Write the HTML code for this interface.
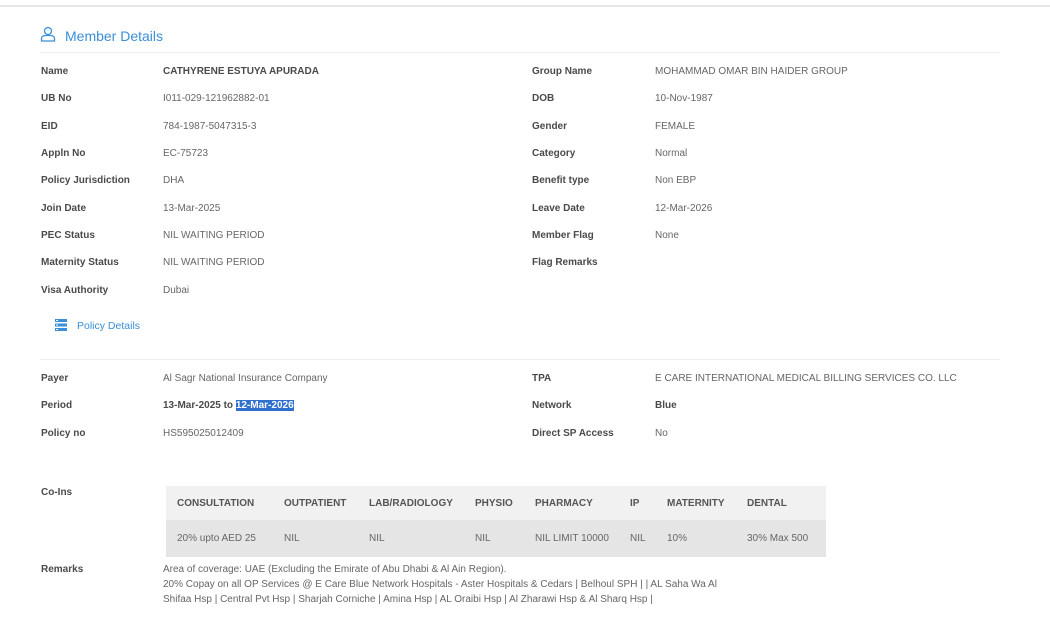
<!DOCTYPE html>
<html><head><meta charset="utf-8"><style>
*{margin:0;padding:0;box-sizing:border-box}
body{width:1050px;height:619px;background:#fff;position:relative;overflow:hidden;font-family:"Liberation Sans",sans-serif;font-size:10px;color:#555}
.a{position:absolute;white-space:nowrap;line-height:12px}
.r{margin-top:2px}
.l{font-weight:bold;color:#4a4a4a}
.v{color:#666}
.b{font-weight:bold;color:#4a4a4a}
.hr{position:absolute;height:1px;background:#eee}
table{position:absolute;left:166px;top:486px;width:660px;border-collapse:collapse;font-size:10px}
th{background:#f1f1f1;height:34px;text-align:left;font-weight:bold;color:#555;padding-left:11px}
td{background:#e5e5e5;height:37px;color:#666;padding-left:11px}
</style></head><body>
<div class="hr" style="left:0;top:5px;width:1050px;height:2px;background:#e6e6e6"></div>
<svg style="position:absolute;left:40px;top:26px" width="16" height="16" viewBox="0 0 16 16" fill="none" stroke="#3a8fd8" stroke-width="1.3"><circle cx="8" cy="5" r="3.5"/><path d="M1.5 15v-2.5c0-1.5 1.5-3 3.5-3h6c2 0 3.5 1.5 3.5 3V15z"/></svg>
<div class="a" style="left:65px;top:28px;font-size:14px;line-height:16px;color:#3a8fd8">Member Details</div>
<div class="hr" style="left:40px;top:52px;width:960px"></div>

<div class="a l r" style="left:41px;top:64px">Name</div><div class="a b r" style="left:163px;top:64px">CATHYRENE ESTUYA APURADA</div>
<div class="a l r" style="left:532px;top:64px">Group Name</div><div class="a v r" style="left:655px;top:64px">MOHAMMAD OMAR BIN HAIDER GROUP</div>
<div class="a l r" style="left:41px;top:91px">UB No</div><div class="a v r" style="left:163px;top:91px">I011-029-121962882-01</div>
<div class="a l r" style="left:532px;top:91px">DOB</div><div class="a v r" style="left:655px;top:91px">10-Nov-1987</div>
<div class="a l r" style="left:41px;top:119px">EID</div><div class="a v r" style="left:163px;top:119px">784-1987-5047315-3</div>
<div class="a l r" style="left:532px;top:119px">Gender</div><div class="a v r" style="left:655px;top:119px">FEMALE</div>
<div class="a l r" style="left:41px;top:146px">Appln No</div><div class="a v r" style="left:163px;top:146px">EC-75723</div>
<div class="a l r" style="left:532px;top:146px">Category</div><div class="a v r" style="left:655px;top:146px">Normal</div>
<div class="a l r" style="left:41px;top:173px">Policy Jurisdiction</div><div class="a v r" style="left:163px;top:173px">DHA</div>
<div class="a l r" style="left:532px;top:173px">Benefit type</div><div class="a v r" style="left:655px;top:173px">Non EBP</div>
<div class="a l r" style="left:41px;top:201px">Join Date</div><div class="a v r" style="left:163px;top:201px">13-Mar-2025</div>
<div class="a l r" style="left:532px;top:201px">Leave Date</div><div class="a v r" style="left:655px;top:201px">12-Mar-2026</div>
<div class="a l r" style="left:41px;top:228px">PEC Status</div><div class="a v r" style="left:163px;top:228px">NIL WAITING PERIOD</div>
<div class="a l r" style="left:532px;top:228px">Member Flag</div><div class="a v r" style="left:655px;top:228px">None</div>
<div class="a l r" style="left:41px;top:255px">Maternity Status</div><div class="a v r" style="left:163px;top:255px">NIL WAITING PERIOD</div>
<div class="a l r" style="left:532px;top:255px">Flag Remarks</div>
<div class="a l r" style="left:41px;top:283px">Visa Authority</div><div class="a v r" style="left:163px;top:283px">Dubai</div>

<svg style="position:absolute;left:55px;top:319px" width="12" height="12" viewBox="0 0 12 12" fill="#3a8fd8"><rect x="0" y="0" width="12" height="3"/><rect x="0" y="4.5" width="12" height="3"/><rect x="0" y="9" width="12" height="3"/><rect x="1" y="1" width="2" height="1" fill="#fff"/><rect x="1" y="5.5" width="2" height="1" fill="#fff"/><rect x="1" y="10" width="2" height="1" fill="#fff"/></svg>
<div class="a" style="left:77px;top:320px;font-size:10.5px;color:#3a8fd8">Policy Details</div>
<div class="hr" style="left:40px;top:359px;width:960px"></div>

<div class="a l r" style="left:41px;top:371px">Payer</div><div class="a v r" style="left:163px;top:371px">Al Sagr National Insurance Company</div>
<div class="a l r" style="left:532px;top:371px">TPA</div><div class="a v r" style="left:655px;top:371px">E CARE INTERNATIONAL MEDICAL BILLING SERVICES CO. LLC</div>
<div class="a l r" style="left:41px;top:398px">Period</div><div class="a b r" style="left:163px;top:398px">13-Mar-2025 to <span style="background:#2f6fd0;color:#fff">12-Mar-2026</span></div>
<div class="a l r" style="left:532px;top:398px">Network</div><div class="a b r" style="left:655px;top:398px">Blue</div>
<div class="a l r" style="left:41px;top:426px">Policy no</div><div class="a v r" style="left:163px;top:426px">HS595025012409</div>
<div class="a l r" style="left:532px;top:426px">Direct SP Access</div><div class="a v r" style="left:655px;top:426px">No</div>

<div class="a l r" style="left:41px;top:485px">Co-Ins</div>
<table><tr><th style="width:107px">CONSULTATION</th><th style="width:85px">OUTPATIENT</th><th style="width:106px">LAB/RADIOLOGY</th><th style="width:60px">PHYSIO</th><th style="width:95px">PHARMACY</th><th style="width:37px">IP</th><th style="width:80px">MATERNITY</th><th>DENTAL</th></tr>
<tr><td>20% upto AED 25</td><td>NIL</td><td>NIL</td><td>NIL</td><td>NIL LIMIT 10000</td><td>NIL</td><td>10%</td><td>30% Max 500</td></tr></table>

<div class="a l r" style="left:41px;top:562px">Remarks</div>
<div class="a v" style="left:163px;top:562px;line-height:15px">Area of coverage: UAE (Excluding the Emirate of Abu Dhabi &amp; Al Ain Region).<br>20% Copay on all OP Services @ E Care Blue Network Hospitals - Aster Hospitals &amp; Cedars | Belhoul SPH | | AL Saha Wa Al<br>Shifaa Hsp | Central Pvt Hsp | Sharjah Corniche | Amina Hsp | AL Oraibi Hsp | Al Zharawi Hsp &amp; Al Sharq Hsp |</div>
</body></html>
